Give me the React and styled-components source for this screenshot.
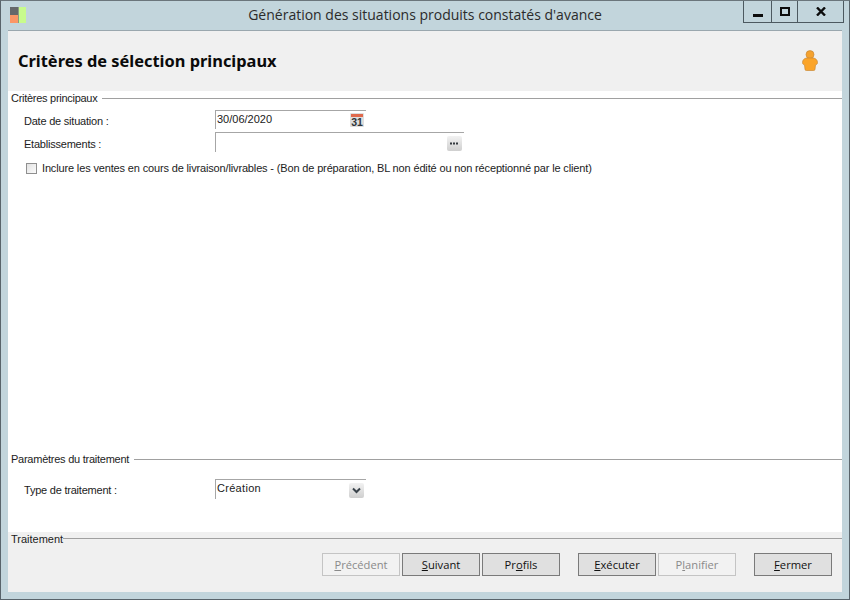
import React from "react";
import styled, { createGlobalStyle } from "styled-components";

const Global = createGlobalStyle`
  html, body { margin: 0; padding: 0; background: #c2d5dc; }
  body { font-family: "Liberation Sans", Arial, sans-serif; }
`;

const Window = styled.div`
  width: 850px;
  height: 600px;
  box-sizing: border-box;
  display: flex;
  flex-direction: column;
  background: #c2d5dc;
  border: 1px solid #59646b;
  border-top-color: #6b767c;
`;

const TitleBar = styled.div`
  height: 29px;
  flex: none;
  display: grid;
  grid-template-columns: 1fr auto 1fr;
  align-items: start;
`;

const AppIcon = styled.svg`
  width: 16px;
  height: 16px;
  margin: 6px 0 0 9px;
  display: block;
`;

const Title = styled.div`
  font: 14px/28px "Open Sans", sans-serif;
  color: #2b2b2b;
  white-space: nowrap;
  text-align: center;
`;

const Controls = styled.div`
  justify-self: end;
  margin-right: 5px;
  display: flex;
  height: 21px;
  border: 1px solid #4c5960;
  border-top: 0;
`;

const Control = styled.div`
  width: ${(p) => p.$w}px;
  display: flex;
  align-items: center;
  justify-content: center;
  & + & { border-left: 1px solid #4c5960; }
`;

const Client = styled.div`
  flex: 1;
  margin: 1px 7px 0;
  display: flex;
  flex-direction: column;
  min-height: 0;
  box-shadow: 0 -1px 0 #9aa7ae;
`;

const Header = styled.div`
  height: 60px;
  flex: none;
  box-sizing: border-box;
  background: #f0f0f0;
  display: flex;
  align-items: center;
  justify-content: space-between;
  padding: 0 24px 2px 10px;
`;

const Heading = styled.h1`
  margin: 0;
  font: bold 16.4px "Noto Sans", sans-serif;
  color: #0a0a0a;
`;

const Body = styled.div`
  flex: 1;
  background: #fff;
  display: flex;
  flex-direction: column;
  min-height: 0;
`;

const Group = styled.section`
  height: ${(p) => p.$h}px;
  flex: none;
  box-sizing: border-box;
`;

const Legend = styled.div`
  display: flex;
  align-items: center;
  height: 14px;
  padding-left: 3px;
  gap: 5px;
  font-size: 11px;
  letter-spacing: ${(p) => p.$ls || 0}px;
  color: #1c1c1c;
  white-space: nowrap;
  &::after {
    content: "";
    flex: 1;
    height: 1px;
    background: #a0a0a0;
    margin-top: ${(p) => p.$lineOffset || 0}px;
  }
`;

const Row = styled.div`
  display: flex;
  align-items: flex-start;
  padding-left: 16px;
  margin-top: ${(p) => p.$mt}px;
`;

const Label = styled.label`
  width: 191px;
  flex: none;
  font-size: 11px;
  letter-spacing: -0.22px;
  line-height: 14px;
  margin-top: ${(p) => p.$mt || 4}px;
  color: #1c1c1c;
`;

const Field = styled.div`
  width: ${(p) => p.$w}px;
  height: ${(p) => p.$h}px;
  box-sizing: border-box;
  border-top: 1px solid #a6a6a6;
  border-left: 1px solid #a6a6a6;
  display: flex;
  justify-content: space-between;
  align-items: flex-start;
  padding-left: 1px;
  font-size: 11px;
  color: #1a1a1a;
`;

const FieldText = styled.span`
  line-height: 16px;
  letter-spacing: ${(p) => p.$ls || 0}px;
`;

const SmallBtn = styled.div`
  width: 15px;
  height: 15px;
  margin: 3px 2px 0 0;
  box-sizing: border-box;
  border-radius: 2px;
  background: linear-gradient(#f2f2f2, #cfcfcf);
  display: flex;
  align-items: center;
  justify-content: center;
`;

const CalendarBox = styled.svg`
  width: 14px;
  height: 14px;
  margin: 2px 2px 0 0;
  flex: none;
  display: block;
`;

const CheckRow = styled.div`
  display: flex;
  align-items: center;
  padding-left: 18px;
  margin-top: 9px;
  height: 14px;
  font-size: 11px;
  letter-spacing: -0.15px;
  color: #1c1c1c;
  white-space: nowrap;
`;

const CheckBox = styled.span`
  width: 11px;
  height: 11px;
  box-sizing: border-box;
  border: 1px solid #8f8f8f;
  background: linear-gradient(135deg, #e2e2e2, #fbfbfb);
  margin-right: 5px;
  flex: none;
`;

const Spacer = styled.div`
  flex: 1;
`;

const Footer = styled.div`
  height: 60px;
  flex: none;
  background: #f0f0f0;
`;

const FooterLegend = styled(Legend)`
  gap: 0;
`;

const Buttons = styled.div`
  display: flex;
  justify-content: flex-end;
  margin-top: 7px;
  padding-right: 10px;
`;

const Btn = styled.div`
  width: 78px;
  height: 23px;
  box-sizing: border-box;
  margin-left: ${(p) => p.$ml ?? 2}px;
  display: flex;
  align-items: center;
  justify-content: center;
  font: 11.2px "Open Sans", sans-serif;
  border: 1px solid ${(p) => (p.$off ? "#c4c4c4" : "#7a7a7a")};
  background: ${(p) => (p.$off ? "#f2f2f2" : "#e0e0e0")};
  color: ${(p) => (p.$off ? "#8a8a8a" : "#111")};
  & u { text-underline-offset: 1px; }
`;

const BottomEdge = styled.div`
  height: 7px;
  flex: none;
`;

const CalendarIcon = () => (
  <CalendarBox viewBox="0 0 14 14">
    <rect x="0" y="0" width="14" height="14" rx="1" fill="#dedede" />
    <rect x="1" y="1" width="12" height="3" fill="#e0694c" />
    <text x="7" y="13" textAnchor="middle" fontSize="10.500" fontWeight="bold" fontFamily="Liberation Sans" fill="#2f353a">31</text>
  </CalendarBox>
);

const DotsIcon = () => (
  <svg width="9" height="3" viewBox="0 0 9 3">
    <rect x="0" y="0.5" width="2" height="2" fill="#33393f" />
    <rect x="3" y="0.5" width="2" height="2" fill="#33393f" />
    <rect x="6" y="0.5" width="2" height="2" fill="#33393f" />
  </svg>
);

const ChevronIcon = () => (
  <svg width="9" height="7" viewBox="0 0 9 7">
    <path d="M1 1.500 L4.500 5 L8 1.500" fill="none" stroke="#39424a" strokeWidth="2" />
  </svg>
);

const PersonIcon = () => (
  <svg width="16" height="21" viewBox="0 0 16 21">
    <circle cx="8" cy="4.600" r="4" fill="#f5a22e" stroke="#c98a3a" strokeWidth="0.700" />
    <path d="M4.500 8C2 8.600 .6 10 .5 12.500c0 1.300.6 2.200 2 2.300L3 19.200c.1.800.5 1.300 1.300 1.300h7.400c.8 0 1.200-.5 1.300-1.300l.5-4.400c1.400-.1 2-1 2-2.300C15.400 10 14 8.600 11.500 8z"
      fill="#fba428" stroke="#c98a3a" strokeWidth="0.700" />
  </svg>
);

export default function App() {
  return (
    <>
      <Global />
      <Window>
        <TitleBar>
          <AppIcon viewBox="0 0 16 16">
            <rect x="0" y="0" width="8" height="8" fill="#66686a" />
            <rect x="0" y="8" width="8" height="8" fill="#fb9666" />
            <rect x="8" y="0" width="1" height="16" fill="#8a9a80" />
            <rect x="9" y="0" width="7" height="16" fill="#c8fb8c" />
          </AppIcon>
          <Title>Génération des situations produits constatés d'avance</Title>
          <Controls>
            <Control $w={27}>
              <svg width="10" height="10" viewBox="0 0 10 10"><rect x="0" y="7" width="10" height="3" fill="#0c0c0c" /></svg>
            </Control>
            <Control $w={25}>
              <svg width="10" height="9" viewBox="0 0 10 9"><rect x="1" y="1" width="8" height="7" fill="none" stroke="#0c0c0c" strokeWidth="2" /></svg>
            </Control>
            <Control $w={45}>
              <svg width="10" height="9" viewBox="0 0 10 9"><path d="M1 .5 L9 8.500 M9 .5 L1 8.500" stroke="#0c0c0c" strokeWidth="2.400" /></svg>
            </Control>
          </Controls>
        </TitleBar>
        <Client>
          <Header>
            <Heading>Critères de sélection principaux</Heading>
            <PersonIcon />
          </Header>
          <Body>
            <Group $h={361}>
              <Legend $ls={-0.28}>Critères principaux</Legend>
              <Row $mt={5}>
                <Label>Date de situation :</Label>
                <Field $w={151} $h={19}>
                  <FieldText>30/06/2020</FieldText>
                  <CalendarIcon />
                </Field>
              </Row>
              <Row $mt={3}>
                <Label $mt={5}>Etablissements :</Label>
                <Field $w={249} $h={20}>
                  <FieldText />
                  <SmallBtn><DotsIcon /></SmallBtn>
                </Field>
              </Row>
              <CheckRow>
                <CheckBox />
                Inclure les ventes en cours de livraison/livrables - (Bon de préparation, BL non édité ou non réceptionné par le client)
              </CheckRow>
            </Group>
            <Group $h={80}>
              <Legend $ls={-0.25}>Paramètres du traitement</Legend>
              <Row $mt={13}>
                <Label $mt={4}>Type de traitement :</Label>
                <Field $w={151} $h={20}>
                  <FieldText $ls={0.3}>Création</FieldText>
                  <SmallBtn><ChevronIcon /></SmallBtn>
                </Field>
              </Row>
            </Group>
            <Spacer />
          </Body>
          <Footer>
            <FooterLegend $lineOffset={-1}>Traitement</FooterLegend>
            <Buttons>
              <Btn $off><span><u>P</u>récédent</span></Btn>
              <Btn><span><u>S</u>uivant</span></Btn>
              <Btn><span>Pr<u>o</u>fils</span></Btn>
              <Btn $ml={18}><span><u>E</u>xécuter</span></Btn>
              <Btn $off><span>P<u>l</u>anifier</span></Btn>
              <Btn $ml={18}><span><u>F</u>ermer</span></Btn>
            </Buttons>
          </Footer>
        </Client>
        <BottomEdge />
      </Window>
    </>
  );
}
